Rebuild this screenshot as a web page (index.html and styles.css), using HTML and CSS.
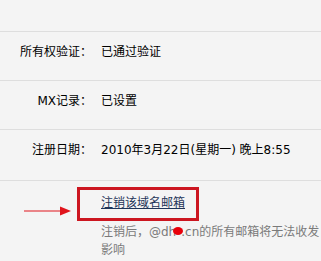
FILE: index.html
```html
<!DOCTYPE html>
<html lang="zh-CN">
<head>
    <meta charset="UTF-8">
    <meta name="viewport" content="width=device-width, initial-scale=1.0">
    <title>域名邮箱设置</title>
    <link rel="stylesheet" href="styles.css">
</head>
<body>
    <div class="info">
        <div class="row first">
            <div class="label">所有权验证：</div>
            <div class="value">已通过验证</div>
        </div>
        <div class="row">
            <div class="label">MX记录：</div>
            <div class="value">已设置</div>
        </div>
        <div class="row tall">
            <div class="label">注册日期：</div>
            <div class="value">2010年3月22日(星期一) 晚上8:55</div>
        </div>
        <div class="row cancel">
            <div class="label"></div>
            <div class="value">
                <a href="#" class="cancel-link">注销该域名邮箱</a>
                <p class="note">注销后，@dh<span class="blot"></span>.cn的所有邮箱将无法收发<br>影响</p>
            </div>
            <!-- annotation drawn over the screenshot -->
            <div class="mark-box"></div>
            <svg class="mark-arrow" width="50" height="12" viewBox="0 0 50 12">
                <line x1="0" y1="6" x2="40" y2="6" stroke="#e0141c" stroke-width="1.2"/>
                <polygon points="36,1.5 47,6 36,10.5" fill="#e0141c"/>
            </svg>
        </div>
    </div>
</body>
</html>
```

FILE: styles.css
```css
html, body {
    margin: 0;
    padding: 0;
}

body {
    width: 321px;
    height: 261px;
    overflow: hidden;
    background-color: #f4f4f4;
    font-family: "DejaVu Sans", "Noto Sans CJK SC", sans-serif;
    font-size: 12px;
    color: #000;
}

.info {
    padding-top: 31px;
}

.row {
    display: grid;
    grid-template-columns: 92px 1fr;
    column-gap: 9px;
    border-top: 1px solid #dedede;
    padding: 12px 0 20px;
    line-height: 16px;
    white-space: nowrap;
}

.row.tall {
    padding-bottom: 22px;
}

.label {
    text-align: right;
}

.row.cancel {
    position: relative;
    padding-top: 14px;
}

.cancel-link {
    color: #1f3558;
    text-decoration: underline;
}

.note {
    margin: 12px 0 0;
    color: #7a7a7a;
    line-height: 18px;
}

.blot {
    display: inline-block;
    width: 10px;
    height: 8px;
    margin: 0 -2px 0 -3px;
    border-radius: 50%;
    background-color: #e8000b;
    vertical-align: 1px;
}

.mark-box {
    position: absolute;
    left: 77px;
    top: 6px;
    width: 116px;
    height: 28px;
    border: 3px solid #cc1620;
}

.mark-arrow {
    position: absolute;
    left: 24px;
    top: 24px;
}
```
